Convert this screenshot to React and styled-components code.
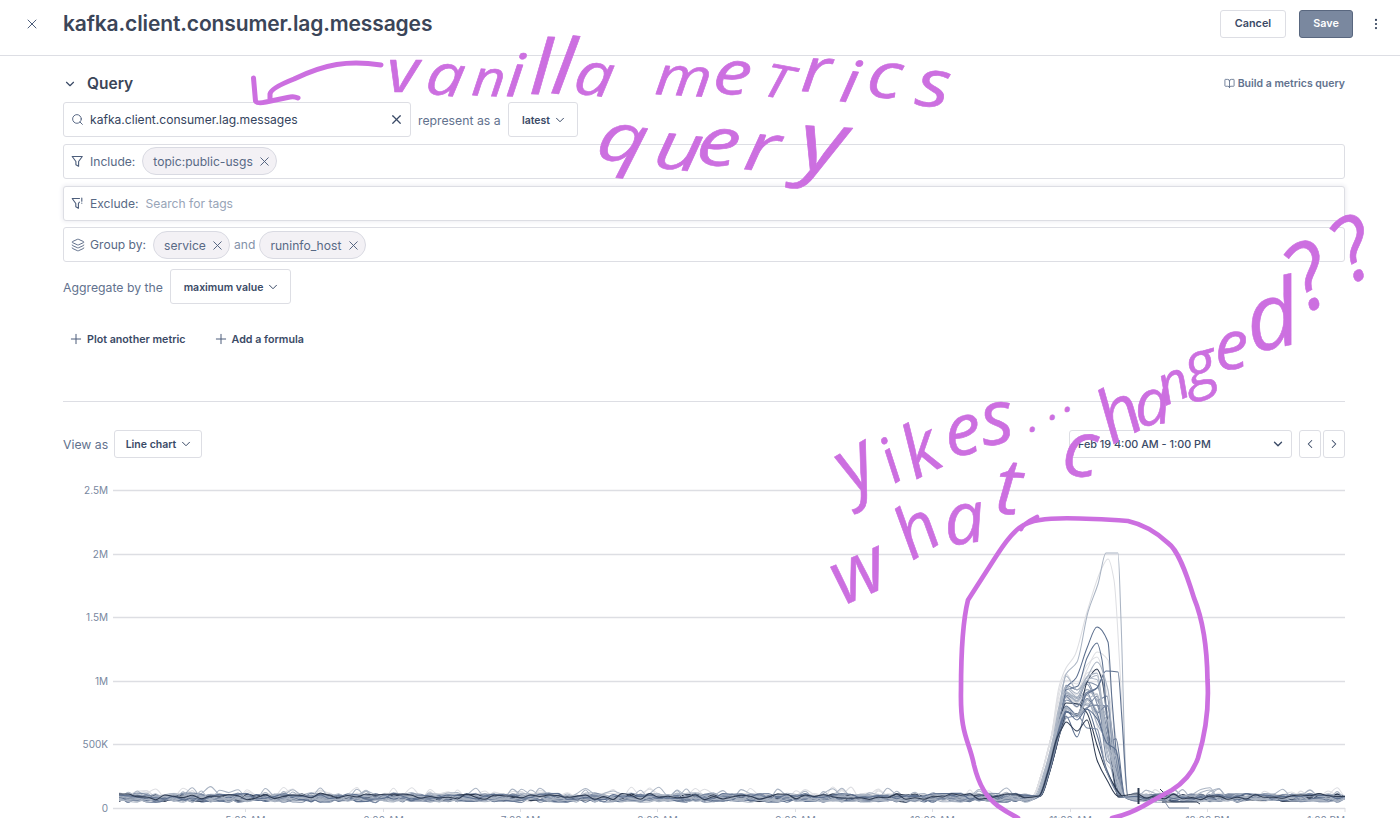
import React from "react";
import styled, { createGlobalStyle } from "styled-components";
import { X, ChevronDown, ChevronLeft, ChevronRight, Search, Plus, Layers, BookOpen, MoreVertical } from "lucide-react";

const GlobalStyle = createGlobalStyle`
  html, body { margin: 0; padding: 0; height: 100%; overflow: hidden; background: #fff; }
  * { box-sizing: border-box; }
  body { font-family: Inter, "Liberation Sans", sans-serif; color: #3a4a66; }
  svg { display: block; flex: none; }
`;

const Page = styled.div`
  position: relative;
  width: 1400px;
  height: 818px;
  overflow: hidden;
  background: #fff;
`;

const Header = styled.header`
  display: flex;
  align-items: center;
  height: 56px;
  padding: 0 17px 8px 24px;
  border-bottom: 1px solid #dddee4;
`;

const Title = styled.h1`
  margin: 0 auto 0 23px;
  font-size: 21px;
  line-height: 26px;
  font-weight: 600;
  letter-spacing: -0.13px;
  color: #3b4558;
`;

const Button = styled.button`
  width: ${(p) => p.$w}px;
  height: 28px;
  padding: 0;
  margin-right: ${(p) => p.$gap || 0}px;
  border: 1px solid ${(p) => (p.$primary ? "#59677f" : "#dddee4")};
  border-radius: 3px;
  background: ${(p) => (p.$primary ? "#7a889f" : "#fff")};
  color: ${(p) => (p.$primary ? "#fff" : "#3a4a66")};
  font: 600 10.8px/26px Inter, sans-serif;
`;

const Main = styled.main`
  display: flex;
  flex-direction: column;
  padding: 0 55px 0 63px;
`;

const SectionHead = styled.div`
  display: flex;
  align-items: center;
  height: 46.3px;
  padding-top: 9px;
  color: #3a4a66;
`;

const SectionTitle = styled.h2`
  margin: 0 auto 0 10px;
  font-size: 15.5px;
  line-height: 20px;
  font-weight: 600;
  color: #3b4558;
`;

const DocsLink = styled.a`
  display: flex;
  align-items: center;
  gap: 3px;
  font-size: 10.5px;
  font-weight: 600;
  color: #62728e;
`;

const QueryRows = styled.div`
  display: flex;
  flex-direction: column;
  gap: 6.7px;
`;

const Line = styled.div`
  display: flex;
  align-items: center;
  height: 35px;
`;

const Field = styled.div`
  display: flex;
  align-items: center;
  width: ${(p) => (p.$w ? p.$w + "px" : "100%")};
  height: 35px;
  padding: 0 6px 0 7px;
  border: 1px solid #dddee4;
  border-radius: 3px;
  background: #fff;
  box-shadow: ${(p) => (p.$raised ? "0 0 4px 1px #ededf2" : "none")};
  color: #586985;
`;

const FieldValue = styled.span`
  margin: 0 auto 0 6px;
  font-size: 12.1px;
  color: #34435d;
`;

const FieldLabel = styled.span`
  margin: 0 7px 0 5px;
  font-size: 12.1px;
  color: #586985;
`;

const Placeholder = styled.span`
  font-size: 12.1px;
  color: #98a4b7;
`;

const Joiner = styled.span`
  margin: 0 4px;
  font-size: 12.1px;
  color: #8492a9;
`;

const Tag = styled.span`
  display: flex;
  align-items: center;
  justify-content: space-between;
  width: ${(p) => p.$w}px;
  height: 28px;
  padding: 1px 4px 0 10px;
  border: 1px solid #d9dae2;
  border-radius: 14px;
  background: #f3f1f5;
  font-size: 12.1px;
  color: #586985;
`;

const Sentence = styled.span`
  width: ${(p) => p.$w}px;
  padding-left: ${(p) => p.$pad || 0}px;
  padding-top: 2px;
  font-size: 12.25px;
  white-space: nowrap;
  color: #62728e;
`;

const Select = styled.div`
  display: flex;
  align-items: center;
  justify-content: ${(p) => (p.$spread ? "space-between" : "center")};
  gap: 3px;
  width: ${(p) => p.$w}px;
  height: ${(p) => p.$h}px;
  padding: 1px ${(p) => (p.$spread ? "6px 0 8px" : p.$icon ? "0" : "0 0 3px")};
  margin-right: ${(p) => p.$gap || 0}px;
  border: 1px solid #dddee4;
  border-radius: 3px;
  background: #fff;
  font-size: ${(p) => (p.$spread ? 10.8 : 10.5)}px;
  font-weight: ${(p) => p.$weight || 600};
  color: #3a4a66;
`;

const Actions = styled.div`
  display: flex;
  align-items: center;
  gap: 27px;
  height: 97.7px;
  padding: 0 0 26px 5px;
  border-bottom: 1px solid #dddee4;
`;

const Action = styled.span`
  display: flex;
  align-items: center;
  gap: 3px;
  font-size: 10.7px;
  font-weight: 600;
  color: #3a4a66;
`;

const ViewBar = styled.div`
  display: flex;
  align-items: center;
  height: 28px;
  margin-top: 28px;
`;

const Spacer = styled.div`
  flex: 1;
`;

const Plot = styled.svg`
  width: 1337px;
  height: 360px;
  margin-left: -63px;
  overflow: visible;
`;

const AxisText = styled.text`
  font: 400 10px Inter, sans-serif;
  fill: #7887a0;
`;

const Markup = styled.svg`
  position: absolute;
  inset: 0;
  pointer-events: none;
`;

const Handwriting = styled.text`
  font-family: "Open Sans", "Noto Sans", sans-serif;
  font-style: italic;
  font-weight: 400;
  fill: #cc6fe0;
  stroke: #cc6fe0;
  stroke-width: 0.6px;
  stroke-linejoin: round;
`;

const Pen = styled.path`
  fill: none;
  stroke: #cc6fe0;
  stroke-width: ${(p) => p.$w || 5}px;
  stroke-linecap: round;
  stroke-linejoin: round;
`;

function FunnelIcon({ exclude }) {
  return (
    <svg width="14" height="13" viewBox="0 0 14 13" fill="none" stroke="#4c5d7b" strokeWidth="1.1" strokeLinejoin="round" strokeLinecap="round">
      <path d={exclude ? "M8.5 1.5H1.200l3.6 5v3.2l2.6 1.6V6.5l1-1.3" : "M1.200 1.5h10.1L7.6 6.5v4.8L4.9 9.7V6.5z"} />
      {exclude && <path d="M10.8 1v3.3M10.8 6v.3" />}
    </svg>
  );
}

// Small deterministic generator so the series look the same on every render.
function seeded(seed) {
  let s = seed;
  return () => {
    s = (s * 1664525 + 1013904223) % 4294967296;
    return s / 4294967296;
  };
}

function smooth(points) {
  const n = points.length;
  const m = points.map((p, i) => {
    if (i === 0 || i === n - 1) return 0;
    const a = (p[1] - points[i - 1][1]) / (p[0] - points[i - 1][0]);
    const b = (points[i + 1][1] - p[1]) / (points[i + 1][0] - p[0]);
    return a * b <= 0 ? 0 : (2 * a * b) / (a + b);
  });
  let d = `M${points[0][0]} ${points[0][1].toFixed(1)}`;
  for (let i = 1; i < n; i++) {
    const [x0, y0] = points[i - 1];
    const [x1, y1] = points[i];
    const h = (x1 - x0) / 3;
    d += `C${(x0 + h).toFixed(1)} ${(y0 + m[i - 1] * h).toFixed(1)} ${(x1 - h).toFixed(1)} ${(y1 - m[i] * h).toFixed(1)} ${x1.toFixed(1)} ${y1.toFixed(1)}`;
  }
  return d;
}

const LIGHT = "#dedfe3";
const PALE = "#aab4c3";
const MID = "#7b8aa3";
const NAVY = "#5c6f8e";
const INK = "#2d3a50";

const PEAKS = [
  [LIGHT, [[1066, 668], [1075, 655], [1087, 612], [1101, 570], [1108, 559], [1114, 580], [1120, 670], [1127, 796]]],
  [PALE, [[1066, 674], [1077, 662], [1088, 612], [1098, 584], [1106, 553], [1118, 553], [1121, 620], [1126, 780], [1128, 797]]],
  [LIGHT, [[1066, 674], [1077, 690], [1087, 670], [1097, 652], [1108, 660], [1116, 760], [1122, 797]]],
  [NAVY, [[1066, 688], [1076, 678], [1087, 648], [1097, 627], [1108, 642], [1112, 700], [1122, 797]]],
  [NAVY, [[1066, 690], [1078, 686], [1087, 658], [1097, 643], [1102, 660], [1109, 740], [1119, 797]]],
  [INK, [[1066, 712], [1078, 714], [1087, 682], [1097, 669], [1102, 680], [1109, 735], [1118, 797]]],
  [NAVY, [[1066, 712], [1078, 716], [1086, 695], [1097, 688], [1106, 671], [1118, 672], [1122, 720], [1128, 797]]],
  [MID, [[1066, 712], [1079, 715], [1086, 693], [1097, 688], [1102, 679], [1109, 740], [1121, 797]]],
  [INK, [[1066, 722], [1077, 731], [1087, 720], [1097, 760], [1107, 780], [1118, 796]]],
  [NAVY, [[1066, 716], [1077, 737], [1087, 709], [1097, 735], [1107, 770], [1122, 797]]],
  [INK, [[1066, 703], [1078, 704], [1087, 713], [1097, 745], [1107, 772], [1124, 797]]],
  [MID, [[1066, 700], [1076, 704], [1087, 705], [1108, 706], [1113, 750], [1124, 797]]],
  [MID, [[1066, 718], [1078, 716], [1087, 728], [1097, 729], [1106, 770], [1122, 797]]],
  [PALE, [[1066, 676], [1077, 690], [1087, 677], [1097, 662], [1108, 690], [1115, 770], [1124, 797]]],
  [LIGHT, [[1066, 680], [1077, 684], [1087, 665], [1097, 657], [1108, 700], [1116, 770], [1124, 797]]],
];

function buildSeries() {
  const rand = seeded(29);
  const shades = [LIGHT, PALE, PALE, MID, LIGHT, PALE, NAVY, MID];
  const out = [];
  for (let k = 0; k < 38; k++) {
    const [color, peak] = PEAKS[k] || [
      shades[k % 8],
      (() => {
        const base = 684 + rand() * 30;
        return [
          [1066, base], [1077, base + 4 + rand() * 6], [1087, base - rand() * 14], [1097, base - 16 + rand() * 34],
          [1107, base + rand() * 65], [1116, 735 + rand() * 55], [1125, 797],
        ];
      })(),
    ];
    const level = 797.5 + (rand() - 0.5) * 3.6;
    const pts = [];
    const wob = (x) => {
      const lift = (color === LIGHT || color === PALE) && rand() < 0.06 ? -6 : 0;
      pts.push([x, level + (rand() - 0.5) * 6.6 + lift]);
    };
    for (let x = 119; x < 1030; x += 9.15) wob(x);
    const top = peak[0][1];
    const shift = color === LIGHT ? -4 : color === PALE ? rand() * 3 - 2 : rand() * 4;
    pts.push([1037 + shift, 796], [1046 + shift, 772], [1055 + shift, 738], [1061.5 + shift * 0.6, (top * 3 + 738) / 4 + 1]);
    pts.push(...peak);
    for (let x = 1137; x <= 1345; x += 9.1) wob(x);
    pts.push([1345, level]);
    // Pale series lie underneath; the others interleave.
    out.push({ color, rank: color === LIGHT ? 0 : 1 + rand() * 2 + (color === INK ? 0.4 : 0), d: smooth(pts) });
  }
  return out.sort((a, b) => a.rank - b.rank);
}

const SERIES = buildSeries();
const Y_TICKS = [["2.5M", 490.5], ["2M", 554.5], ["1.5M", 617.5], ["1M", 681.5], ["500K", 744.5], ["0", 808.5]];
const X_TICKS = [["5:00 AM", 245.5], ["6:00 AM", 383.5], ["7:00 AM", 520.5], ["8:00 AM", 657.5], ["9:00 AM", 795.5], ["10:00 AM", 932.5], ["11:00 AM", 1070.5], ["12:00 PM", 1207.5], ["1:00 PM", 1345]];

function Chart() {
  return (
    <Plot viewBox="0 458 1337 360">
      {Y_TICKS.map(([label, y]) => (
        <g key={label}>
          <path d={`M113 ${y}H1345`} stroke="#dddee3" strokeWidth="1.5" />
          <AxisText x="108" y={y + 3.5} textAnchor="end">{label}</AxisText>
        </g>
      ))}
      {X_TICKS.map(([label, x]) => (
        <g key={label}>
          <path d={`M${x} 808v4`} stroke="#dddee3" />
          <AxisText x={x} y="823.5" textAnchor={x === 1345 ? "end" : "middle"}>{label}</AxisText>
        </g>
      ))}
      {SERIES.map((s, i) => (
        <path key={i} d={s.d} fill="none" stroke={s.color} strokeWidth="1.05" />
      ))}
      <path d="M1138.5 788v16" stroke={INK} strokeWidth="2" />
      <path d="M1160 789l7 7M1162 802h35l3 2" fill="none" stroke={INK} />
      <path d="M1163 799l6 9h20" fill="none" stroke={MID} />
    </Plot>
  );
}

// Each note: horizontal stretch, then [letter, x, baseline, size, rotation] for its letters.
const NOTES = [
  [1.15, [["v", 387, 92, 60, 0], ["a", 424, 93, 58, 8], ["n", 471, 95, 50, 4], ["i", 505, 96, 60, 4], ["l", 529, 94, 76, 2], ["l", 549, 93, 78, 6], ["a", 572, 93, 60, 8]]],
  [1.2, [["m", 654, 94, 54, 4], ["e", 711, 92, 62, 8], ["T", 760, 95, 46, 12], ["r", 800, 91, 62, 4], ["i", 838, 101, 58, 8], ["c", 865, 96, 64, 6], ["s", 914, 105, 66, 6]]],
  [1.25, [["q", 594, 158, 68, 10], ["u", 652, 167, 66, 8], ["e", 694, 163, 68, 8], ["r", 742, 169, 68, 8], ["y", 797, 169, 82, 4]]],
  [1, [["y", 852, 495, 78, -30], ["i", 894, 484, 62, -30], ["k", 915, 480, 72, -26], ["e", 948, 457, 72, -8], ["s", 984, 446, 76, -8], [".", 1029, 432, 40, 0], [".", 1049, 420, 40, 0], [".", 1064, 412, 40, 0]]],
  [1, [["w", 843, 606, 76, -24], ["h", 912, 561, 70, -32], ["a", 947, 546, 72, -8], ["t", 994, 513, 78, 4]]],
  [1, [["c", 1061, 475, 78, 4], ["h", 1112, 445, 72, -28], ["a", 1137, 427, 64, -8], ["n", 1165, 406, 54, -22], ["g", 1190, 389, 62, -16], ["e", 1216, 370, 68, -4], ["d", 1252, 353, 92, -12], ["?", 1305, 314, 92, -28], ["?", 1350, 285, 88, -28]]],
];

function Annotations() {
  return (
    <Markup width="1400" height="818" viewBox="0 0 1400 818">
      {NOTES.map(([stretch, letters], i) => (
        <Handwriting key={i} transform={`scale(${stretch} 1)`}>
          {letters.map(([ch, x, y, size, turn], j) => (
            <tspan key={j} x={(x / stretch).toFixed(1)} y={y} fontSize={size} rotate={turn}>{ch}</tspan>
          ))}
        </Handwriting>
      ))}
      <Pen d="M253.500 78L255.500 101Q257 104 266 102L290 97Q294 96 298 98M270 100V94Q271 88 294 79C325 64 348 60 381 65" />
      <Pen $w={4.7} d="M1021 529Q1023 524 1037 517M1112 818C1122 816 1136 811 1152 801L1172 790Q1191 778 1198 758C1206 732 1209 705 1207.500 680C1207 640 1201 615 1194 598C1186 572 1178 550 1168 543Q1150 526 1128 521C1100 519 1055 517 1040 520C1025 522 1015 526 995 558L968 600C963 620 961 650 961 690C960 735 969 740 974 765C979 785 986 797 998 806Q1008 813 1018 818" />
    </Markup>
  );
}

const ICON = { strokeWidth: 1.5, color: "#4c5d7b" };

export default function App() {
  return (
    <Page>
      <GlobalStyle />
      <Header>
        <X size={16} {...ICON} />
        <Title>kafka.client.consumer.lag.messages</Title>
        <Button $w={66} $gap={13}>Cancel</Button>
        <Button $w={54} $gap={16} $primary>Save</Button>
        <MoreVertical size={14} strokeWidth={1.8} color="#34435d" />
      </Header>
      <Main>
        <SectionHead>
          <ChevronDown size={14} strokeWidth={2} />
          <SectionTitle>Query</SectionTitle>
          <DocsLink><BookOpen size={11} strokeWidth={1.9} />Build a metrics query</DocsLink>
        </SectionHead>
        <QueryRows>
          <Line>
            <Field $w={348}>
              <Search size={13} strokeWidth={1.7} color="#4c5d7b" />
              <FieldValue>kafka.client.consumer.lag.messages</FieldValue>
              <X size={15} strokeWidth={1.9} color="#3a4a66" />
            </Field>
            <Sentence $w={97} $pad={7}>represent as a</Sentence>
            <Select $w={70} $h={35}>latest<ChevronDown size={14} strokeWidth={1.7} /></Select>
          </Line>
          <Field>
            <FunnelIcon />
            <FieldLabel>Include:</FieldLabel>
            <Tag $w={135}>topic:public-usgs<X size={15} {...ICON} /></Tag>
          </Field>
          <Field $raised>
            <FunnelIcon exclude />
            <FieldLabel>Exclude:</FieldLabel>
            <Placeholder>Search for tags</Placeholder>
          </Field>
          <Field>
            <Layers size={14} {...ICON} />
            <FieldLabel>Group by:</FieldLabel>
            <Tag $w={77}>service<X size={15} {...ICON} /></Tag>
            <Joiner>and</Joiner>
            <Tag $w={107}>runinfo_host<X size={15} {...ICON} /></Tag>
          </Field>
          <Line>
            <Sentence $w={107}>Aggregate by the</Sentence>
            <Select $w={121} $h={35}>maximum value<ChevronDown size={14} strokeWidth={1.7} /></Select>
          </Line>
        </QueryRows>
        <Actions>
          <Action><Plus size={16} {...ICON} />Plot another metric</Action>
          <Action><Plus size={16} {...ICON} />Add a formula</Action>
        </Actions>
        <ViewBar>
          <Sentence $w={51}>View as</Sentence>
          <Select $w={88} $h={28}>Line chart<ChevronDown size={14} strokeWidth={1.7} /></Select>
          <Spacer />
          <Select $w={223} $h={28} $gap={7} $spread $weight={500}>Feb 19 4:00 AM - 1:00 PM<ChevronDown size={14} strokeWidth={2.3} /></Select>
          <Select $w={22} $h={28} $gap={2} $icon><ChevronLeft size={14} strokeWidth={1.8} /></Select>
          <Select $w={22} $h={28} $icon><ChevronRight size={14} strokeWidth={1.8} /></Select>
        </ViewBar>
        <Chart />
      </Main>
      <Annotations />
    </Page>
  );
}
